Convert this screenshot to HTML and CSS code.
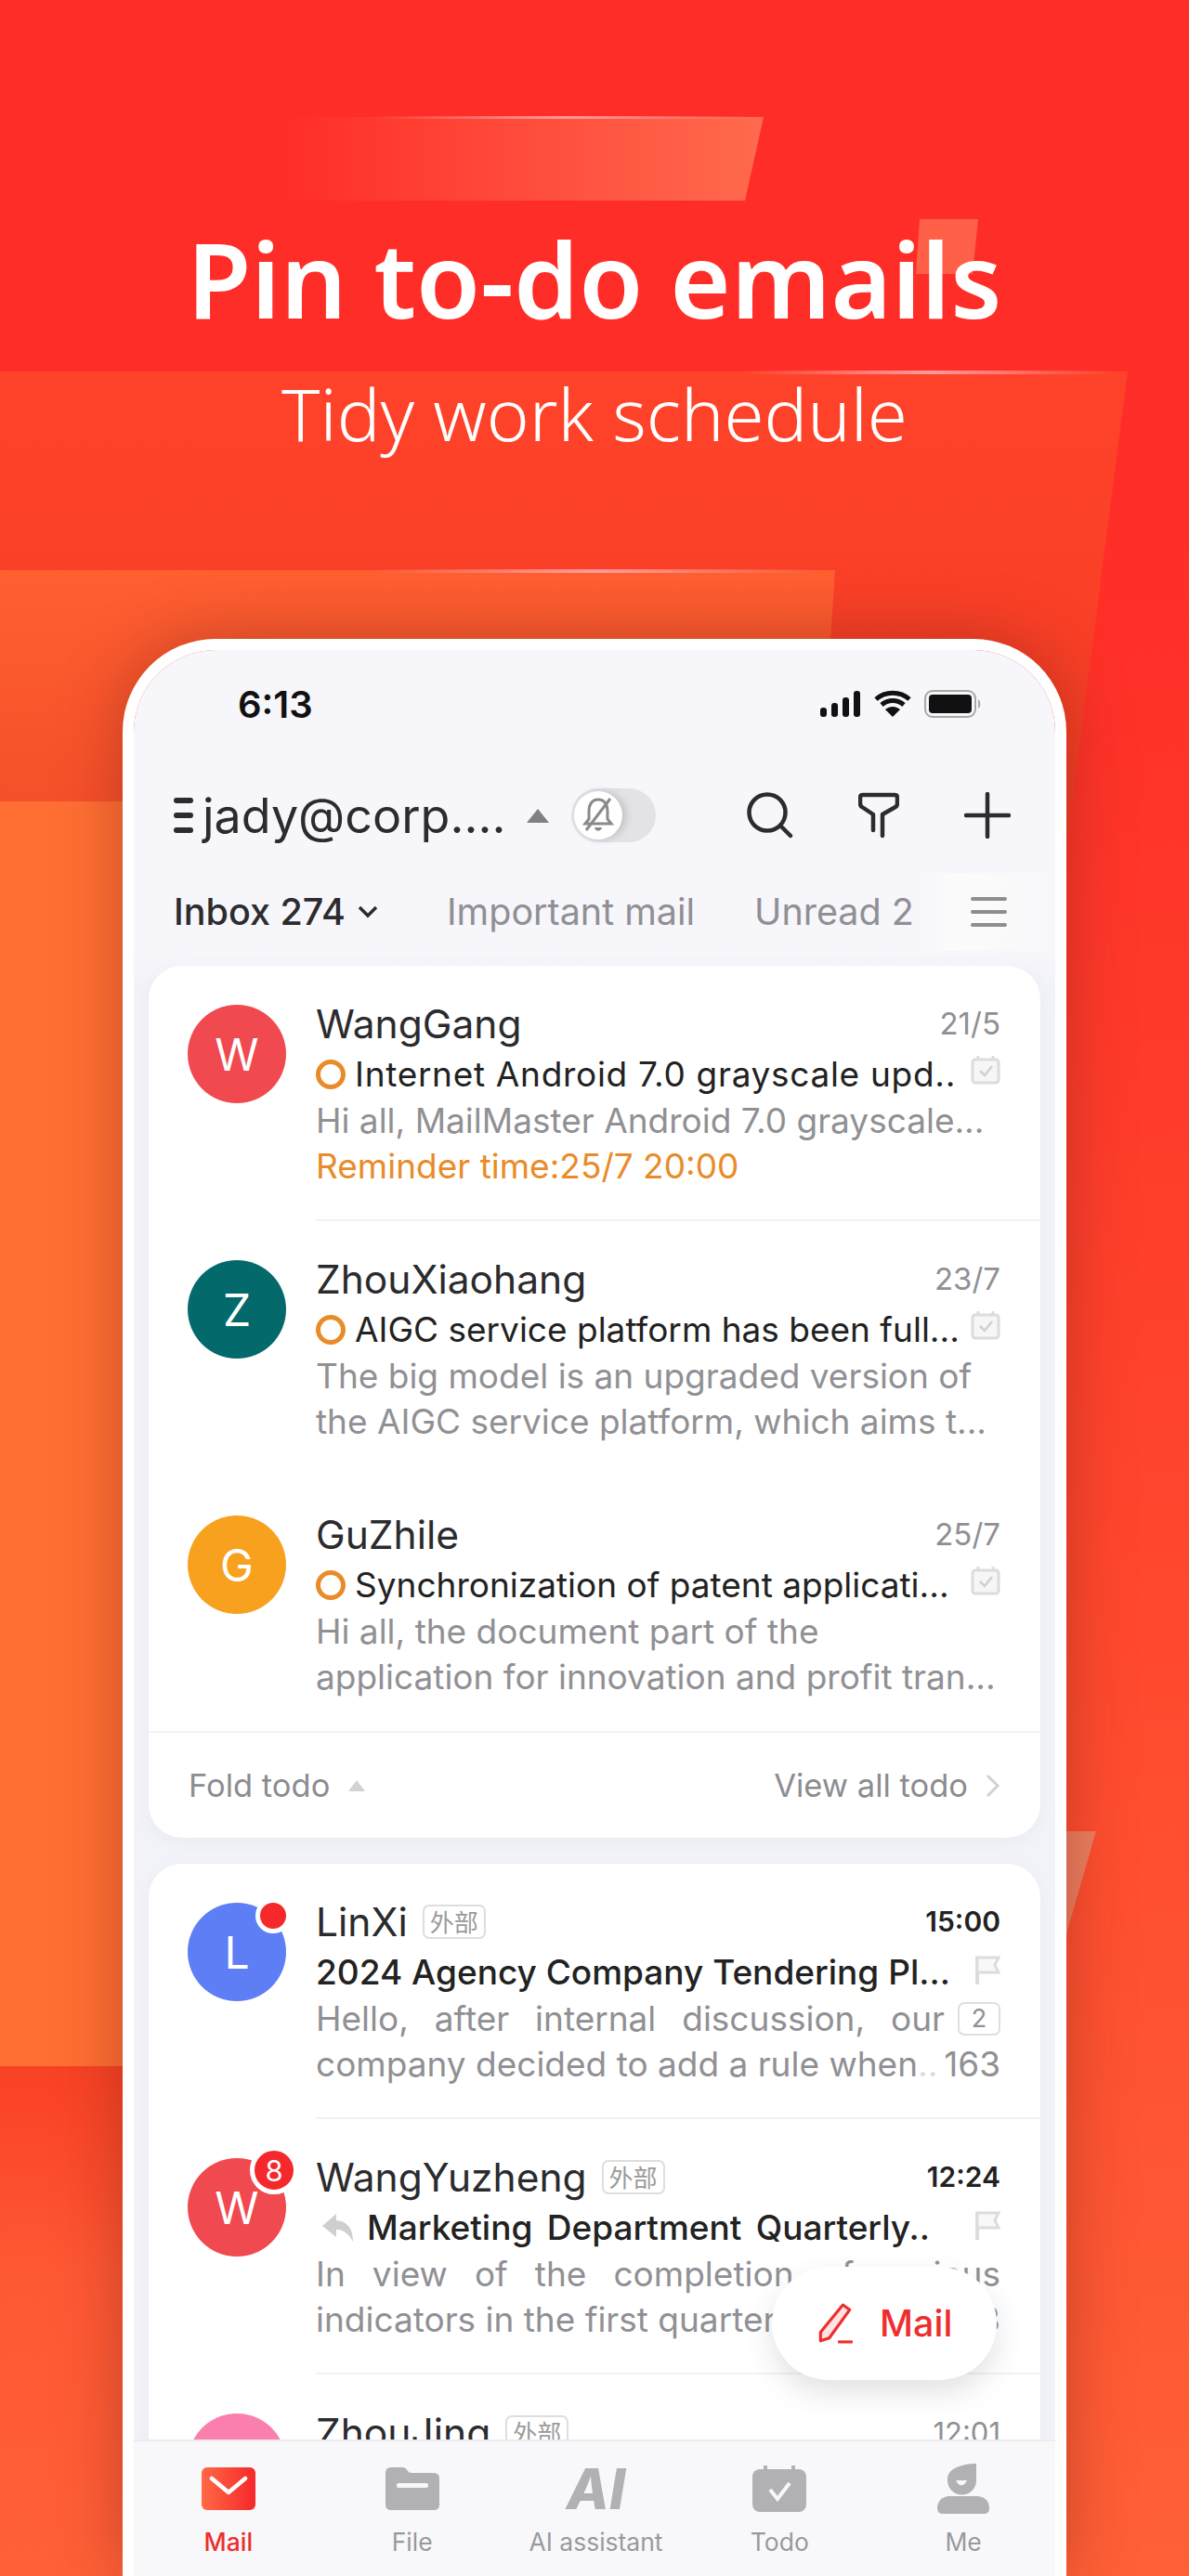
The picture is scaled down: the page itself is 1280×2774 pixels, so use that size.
FILE: index.html
```html
<!DOCTYPE html>
<html lang="en">
<head>
    <meta charset="UTF-8">
    <title>Pin to-do emails</title>
    <link rel="stylesheet" href="styles.css">
</head>
<body>
<div class="page">
    <!-- background shapes -->
    <svg class="bg-shapes" width="1280" height="2774" viewBox="0 0 1280 2774">
        <defs>
            <linearGradient id="bgBase" x1="0" y1="0" x2="0" y2="1">
                <stop offset="0" stop-color="#ff2d27"/>
                <stop offset="0.2" stop-color="#ff2d27"/>
                <stop offset="0.7" stop-color="#ff4d2f"/>
                <stop offset="1" stop-color="#ff6037"/>
            </linearGradient>
            <linearGradient id="barFade" x1="0" y1="0" x2="1" y2="0">
                <stop offset="0" stop-color="#ff6a4d" stop-opacity="0"/>
                <stop offset="1" stop-color="#ff6a4d"/>
            </linearGradient>
            <linearGradient id="midShape" x1="0" y1="0" x2="0" y2="1">
                <stop offset="0" stop-color="#ff432a"/>
                <stop offset="1" stop-color="#f43d24"/>
            </linearGradient>
            <linearGradient id="lowShape" x1="0" y1="0" x2="0" y2="1">
                <stop offset="0" stop-color="#ff5f31"/>
                <stop offset="1" stop-color="#f44e28"/>
            </linearGradient>
            <linearGradient id="footShape" x1="0" y1="0" x2="0" y2="1">
                <stop offset="0" stop-color="#f94224"/>
                <stop offset="1" stop-color="#f94224" stop-opacity="0"/>
            </linearGradient>
            <linearGradient id="glow" x1="0" y1="0" x2="1" y2="0">
                <stop offset="0" stop-color="#ff9a9a" stop-opacity="0"/>
                <stop offset="0.5" stop-color="#ff9a9a"/>
                <stop offset="1" stop-color="#ff9a9a" stop-opacity="0"/>
            </linearGradient>
        </defs>
        <rect width="1280" height="2774" fill="url(#bgBase)"/>
        <polygon points="300,126 822,126 802,216 300,216" fill="url(#barFade)"/>
        <polygon points="990,236 1053,236 1047,295 986,295" fill="#ff6048"/>
        <polygon points="0,400 1214,400 1148,912 0,912" fill="url(#midShape)"/>
        <polygon points="0,614 899,614 880,900 0,900" fill="url(#lowShape)"/>
        <rect x="0" y="863" width="140" height="1362" fill="#ff6f33"/>
        <rect x="0" y="2225" width="140" height="220" fill="url(#footShape)"/>
        <polygon points="1180,1972 1140,1972 1140,2110" fill="#ee8060"/>
        <rect x="400" y="125" width="420" height="3" fill="url(#glow)"/>
        <rect x="800" y="399" width="400" height="4" fill="url(#glow)"/>
        <rect x="400" y="613" width="480" height="4" fill="url(#glow)"/>
    </svg>

    <header class="hero">
        <h1>Pin to-do emails</h1>
        <p>Tidy work schedule</p>
    </header>

    <!-- icons used more than once -->
    <svg class="icon-defs" width="0" height="0">
        <symbol id="icCal" viewBox="0 0 32 32">
            <path d="M8 1v5M24 1v5" fill="none" stroke="#dcdcdc" stroke-width="3"/>
            <rect x="2" y="5" width="28" height="25" rx="3" fill="#f6f6f6" stroke="#dcdcdc" stroke-width="3"/>
            <path d="M10 17l5 5 8-10" fill="none" stroke="#d0d0d0" stroke-width="2.5"/>
        </symbol>
        <symbol id="icFlag" viewBox="0 0 28 32">
            <path d="M3 2v30" stroke="#dcdcdc" stroke-width="4" fill="none"/>
            <path d="M3 3h23l-4 8 4 8H3z" fill="#f8f8f8" stroke="#dcdcdc" stroke-width="3"/>
        </symbol>
    </svg>

    <div class="phone">
        <div class="screen">
            <div class="status-bar">
                <span class="clock">6:13</span>
                <div class="status-icons">
                    <svg width="44" height="28" viewBox="0 0 44 28">
                        <rect x="0" y="18" width="7" height="10" rx="3" fill="#111"/>
                        <rect x="12" y="13" width="7" height="15" rx="3" fill="#111"/>
                        <rect x="24" y="7" width="7" height="21" rx="3" fill="#111"/>
                        <rect x="36" y="0" width="7" height="28" rx="3" fill="#111"/>
                    </svg>
                    <svg width="40" height="30" viewBox="0 0 40 30">
                        <path d="M2 10C12 1 28 1 38 10M8 16C15 10 25 10 32 16" fill="none" stroke="#111" stroke-width="5"/>
                        <path d="M20 29l-8-8c5-4 11-4 16 0z" fill="#111"/>
                    </svg>
                    <svg width="62" height="30" viewBox="0 0 62 30">
                        <rect x="1" y="1" width="54" height="28" rx="8" fill="none" stroke="#a8a8a8" stroke-width="2"/>
                        <rect x="5" y="5" width="46" height="20" rx="4" fill="#111"/>
                        <path d="M58 10c3 1 3 9 0 10z" fill="#a8a8a8"/>
                    </svg>
                </div>
            </div>

            <div class="account-bar">
                <div class="acc-menu"><i></i><i></i><i></i></div>
                <span class="acc-name">jady@corp....</span>
                <span class="acc-caret"></span>
                <div class="bell-toggle">
                    <span class="bell-knob">
                        <svg width="34" height="40" viewBox="0 0 34 40">
                            <path d="M17 3c-7 0-10 6-10 12v9l-4 5h28l-4-5v-9c0-6-3-12-10-12z" fill="none" stroke="#8a8a8a" stroke-width="3"/>
                            <path d="M13 33c1 5 7 5 8 0z" fill="#8a8a8a"/>
                            <path d="M30 2L4 36" stroke="#8a8a8a" stroke-width="3"/>
                        </svg>
                    </span>
                </div>
                <div class="acc-actions">
                    <svg width="50" height="50" viewBox="0 0 50 50">
                        <circle cx="22" cy="22" r="19.5" fill="none" stroke="#2c2c30" stroke-width="4.5"/>
                        <path d="M36 36l11 11" stroke="#2c2c30" stroke-width="4.5" stroke-linecap="round"/>
                    </svg>
                    <svg width="44" height="50" viewBox="0 0 44 50">
                        <path d="M16 41V24L4 16Q2 15 2 12V6Q2 3 5 3H39Q42 3 42 6V12Q42 15 40 16L26 24V47" fill="none" stroke="#2c2c30" stroke-width="4.5" stroke-linecap="round" stroke-linejoin="round"/>
                    </svg>
                    <svg width="50" height="50" viewBox="0 0 50 50">
                        <path d="M25 2v46M2 25h46" stroke="#2c2c30" stroke-width="4.5" stroke-linecap="round"/>
                    </svg>
                </div>
            </div>

            <div class="folder-tabs">
                <span class="tab-current">Inbox 274</span>
                <svg class="tab-chev" width="22" height="14" viewBox="0 0 22 14">
                    <path d="M2 2l9 9 9-9" fill="none" stroke="#2c2c30" stroke-width="3.5"/>
                </svg>
                <span class="tab-other tab-important">Important mail</span>
                <span class="tab-other tab-unread">Unread 2</span>
                <div class="tab-menu"><i></i><i></i><i></i></div>
            </div>

            <div class="mail-list">
                <section class="card">
                    <article class="mail">
                        <div class="avatar av-red">W</div>
                        <div class="mail-body">
                            <div class="line-name"><span class="name">WangGang</span><span class="date">21/5</span></div>
                            <div class="line-subject"><span class="ring"></span><span class="subject subject-wide">Internet Android 7.0 grayscale upd..</span><svg class="side-icon" width="32" height="32"><use href="#icCal"/></svg></div>
                            <div class="line-preview">Hi all, MailMaster Android 7.0 grayscale...</div>
                            <div class="line-preview reminder">Reminder time:25/7 20:00</div>
                        </div>
                    </article>
                    <div class="sep"></div>
                    <article class="mail">
                        <div class="avatar av-teal">Z</div>
                        <div class="mail-body">
                            <div class="line-name"><span class="name">ZhouXiaohang</span><span class="date">23/7</span></div>
                            <div class="line-subject"><span class="ring"></span><span class="subject">AIGC service platform has been full...</span><svg class="side-icon" width="32" height="32"><use href="#icCal"/></svg></div>
                            <div class="line-preview">The big model is an upgraded version of</div>
                            <div class="line-preview">the AIGC service platform, which aims t...</div>
                        </div>
                    </article>
                    <div class="sep sep-none"></div>
                    <article class="mail mail-last">
                        <div class="avatar av-amber">G</div>
                        <div class="mail-body">
                            <div class="line-name"><span class="name">GuZhile</span><span class="date">25/7</span></div>
                            <div class="line-subject"><span class="ring"></span><span class="subject">Synchronization of patent applicati...</span><svg class="side-icon" width="32" height="32"><use href="#icCal"/></svg></div>
                            <div class="line-preview">Hi all, the document part of the</div>
                            <div class="line-preview">application for innovation and profit tran...</div>
                        </div>
                    </article>
                    <div class="todo-foot">
                        <span class="fold">Fold todo<i class="fold-caret"></i></span>
                        <span class="view-all">View all todo
                            <svg width="16" height="26" viewBox="0 0 16 26"><path d="M2 2l11 11L2 24" fill="none" stroke="#d2d2d2" stroke-width="3"/></svg>
                        </span>
                    </div>
                </section>

                <section class="card">
                    <article class="mail">
                        <div class="avatar av-blue">L<span class="dot"></span></div>
                        <div class="mail-body">
                            <div class="line-name"><span class="name">LinXi</span><span class="tag">外部</span><span class="date date-unread">15:00</span></div>
                            <div class="line-subject"><span class="subject subject-unread">2024 Agency Company Tendering Pl...</span><svg class="side-icon flag" width="28" height="32"><use href="#icFlag"/></svg></div>
                            <div class="line-preview line-count"><span class="just">Hello, after internal discussion, our</span><span class="count">2</span></div>
                            <div class="line-preview line-count"><span class="fade-text">company decided to add a rule when<b>..</b></span><span class="num">163</span></div>
                        </div>
                    </article>
                    <div class="sep"></div>
                    <article class="mail">
                        <div class="avatar av-red">W<span class="dot dot-num">8</span></div>
                        <div class="mail-body">
                            <div class="line-name"><span class="name">WangYuzheng</span><span class="tag">外部</span><span class="date date-unread">12:24</span></div>
                            <div class="line-subject">
                                <svg class="reply" width="34" height="30" viewBox="0 0 34 30"><path d="M15 0L0 13l15 12v-8c8 0 13 4 18 13 0-14-6-22-18-23z" fill="#cfcfcf"/></svg>
                                <span class="subject subject-unread just just-subject">Marketing Department Quarterly..</span><svg class="side-icon flag" width="28" height="32"><use href="#icFlag"/></svg>
                            </div>
                            <div class="line-preview just">In view of the completion of various</div>
                            <div class="line-preview line-count"><span>indicators in the first quarter</span><span class="num">8</span></div>
                        </div>
                    </article>
                    <div class="sep"></div>
                    <article class="mail">
                        <div class="avatar av-pink">Z</div>
                        <div class="mail-body">
                            <div class="line-name"><span class="name">ZhouJing</span><span class="tag">外部</span><span class="date date-clock">12:01</span></div>
                        </div>
                    </article>
                </section>
            </div>

            <nav class="tabbar">
                <div class="tab-item active">
                    <svg width="58" height="46" viewBox="0 0 58 46">
                        <defs><linearGradient id="mailRed" x1="0" y1="0" x2="1" y2="0"><stop offset="0" stop-color="#ff6a45"/><stop offset="1" stop-color="#f7272b"/></linearGradient></defs>
                        <rect width="58" height="46" rx="6" fill="url(#mailRed)"/>
                        <path d="M11 12l18 15 18-15" fill="none" stroke="#fff" stroke-width="4.5" stroke-linecap="round" stroke-linejoin="round"/>
                    </svg>
                    <span>Mail</span>
                </div>
                <div class="tab-item">
                    <svg width="58" height="46" viewBox="0 0 58 46">
                        <path d="M0 6Q0 0 6 0H18Q22 0 24 4Q25 6 28 6H52Q58 6 58 12V40Q58 46 52 46H6Q0 46 0 40z" fill="#b1b1b3"/>
                        <rect x="12" y="17" width="34" height="5" rx="2" fill="#f8f8fa"/>
                    </svg>
                    <span>File</span>
                </div>
                <div class="tab-item">
                    <span class="ai-mark">AI</span>
                    <span>AI assistant</span>
                </div>
                <div class="tab-item">
                    <svg width="58" height="50" viewBox="0 0 58 50">
                        <path d="M14 0v8M44 0v8" stroke="#b1b1b3" stroke-width="4"/>
                        <rect y="4" width="58" height="46" rx="8" fill="#b1b1b3"/>
                        <path d="M19 26l8 10 13-17" fill="none" stroke="#f8f8fa" stroke-width="4"/>
                    </svg>
                    <span>Todo</span>
                </div>
                <div class="tab-item">
                    <svg width="56" height="54" viewBox="0 0 56 54">
                        <path d="M42 0V18a15.500 15.500 0 0 1-31 0V16C11 6 26 0 42 0z" fill="#b1b1b3"/>
                        <path d="M20 18c3 7 9 7 12 0z" fill="#f8f8fa"/>
                        <path d="M12 35H44Q56 37 56 48Q56 54 50 54H6Q0 54 0 48Q0 37 12 35z" fill="#b1b1b3"/>
                    </svg>
                    <span>Me</span>
                </div>
            </nav>

            <div class="fab">
                <svg width="40" height="44" viewBox="0 0 38 42">
                    <path d="M27 2l7 5L13 36l-9 3 0-9z" fill="#fde3e1" stroke="#ee2e2e" stroke-width="3" stroke-linejoin="round"/>
                    <path d="M22 40h15" stroke="#ee2e2e" stroke-width="3"/>
                </svg>
                <span>Mail</span>
            </div>
        </div>
    </div>
</div>
</body>
</html>
```
FILE: styles.css
```css
* {
    box-sizing: border-box;
}
body {
    margin: 0;
    font-family: Inter, "Liberation Sans", sans-serif;
}
.page {
    position: relative;
    width: 1280px;
    height: 2774px;
    overflow: hidden;
    background: #ff2d27;
}
.bg-shapes {
    position: absolute;
    top: 0;
    left: 0;
}
.icon-defs {
    position: absolute;
}

/* Hero */
.hero {
    position: relative;
    height: 688px;
    padding-top: 226px;
    text-align: center;
    color: #fff;
    font-family: "Noto Sans", sans-serif;
}
.hero h1 {
    margin: 0;
    font-size: 112px;
    line-height: 148px;
    font-weight: 600;
}
.hero p {
    margin: 23px 0 0;
    font-size: 78px;
    line-height: 96px;
    font-weight: 300;
}

/* Phone */
.phone {
    position: relative;
    width: 1016px;
    height: 2086px;
    margin: 0 auto;
    border: 12px solid #fff;
    border-bottom: none;
    border-radius: 100px 100px 0 0;
    box-shadow: 0 0 70px rgba(110, 30, 20, 0.4);
}
.screen {
    position: relative;
    display: flex;
    flex-direction: column;
    height: 100%;
    overflow: hidden;
    background: #f6f6fb;
    border-radius: 88px 88px 0 0;
}

/* Status bar */
.status-bar {
    flex: none;
    display: flex;
    align-items: center;
    justify-content: space-between;
    height: 116px;
    padding: 0 79px 0 112px;
}
.clock {
    font-size: 40px;
    font-weight: 600;
    color: #111;
}
.status-icons {
    display: flex;
    align-items: center;
    gap: 14px;
}

/* Account row */
.account-bar {
    flex: none;
    display: flex;
    align-items: center;
    height: 124px;
    padding-left: 43px;
}
.acc-menu {
    display: flex;
    flex-direction: column;
    gap: 10px;
    margin-right: 10px;
}
.acc-menu i {
    display: block;
    width: 21px;
    height: 6px;
    border-radius: 3px;
    background: #2c2c30;
}
.acc-name {
    width: 349px;
    font-size: 52px;
    color: #2c2c30;
    white-space: nowrap;
}
.acc-caret {
    width: 0;
    height: 0;
    border-left: 12px solid transparent;
    border-right: 12px solid transparent;
    border-bottom: 15px solid #808084;
}
.bell-toggle {
    width: 91px;
    height: 58px;
    margin-left: 24px;
    padding: 3px;
    border-radius: 29px;
    background: #e3e3e5;
}
.bell-knob {
    display: flex;
    align-items: center;
    justify-content: center;
    width: 52px;
    height: 52px;
    border-radius: 50%;
    background: #fff;
    box-shadow: 4px 0 8px rgba(0, 0, 0, 0.15);
}
.acc-actions {
    display: flex;
    align-items: center;
    gap: 70px;
    margin-left: 98px;
}

/* Folder tabs */
.folder-tabs {
    flex: none;
    position: relative;
    display: flex;
    align-items: center;
    height: 84px;
    padding-left: 43px;
    font-size: 39.5px;
    white-space: nowrap;
}
.tab-current {
    width: 198px;
    font-weight: 500;
    color: #2c2c30;
}
.tab-chev {
    margin-right: 74px;
}
.tab-other {
    color: #8f8f94;
}
.tab-important {
    width: 331px;
}
.tab-menu {
    position: absolute;
    top: 0;
    right: 0;
    display: flex;
    flex-direction: column;
    justify-content: center;
    gap: 10px;
    width: 150px;
    height: 84px;
    padding: 0 52px 0 59px;
    background: linear-gradient(90deg, rgba(251, 251, 251, 0), #fbfbfb 25%, #f9f9fb 90%, rgba(251, 251, 251, 0));
}
.tab-menu i {
    display: block;
    height: 4px;
    border-radius: 2px;
    background: #8e8e8e;
}

/* Mail list */
.mail-list {
    flex: 1;
    min-height: 0;
    overflow: hidden;
    padding: 16px 16px 0;
    background: linear-gradient(#f6f6fb, #f2f3f8 40px);
}
.card {
    margin-bottom: 28px;
    border-radius: 36px;
    background: #fff;
    box-shadow: 0 4px 16px rgba(120, 120, 160, 0.06);
}
.mail {
    display: flex;
    gap: 32px;
    height: 273px;
    padding: 42px 43px 0 42px;
}
.mail-last {
    height: 274px;
}
.avatar {
    position: relative;
    flex: none;
    display: flex;
    align-items: center;
    justify-content: center;
    width: 106px;
    height: 106px;
    border-radius: 50%;
    font-size: 48px;
    color: #fff;
}
.av-red { background: #f0494f; }
.av-teal { background: #04696b; }
.av-amber { background: #f7a11f; }
.av-blue { background: #5e7ef5; }
.av-pink { background: #fb7fae; }
.dot {
    position: absolute;
    top: -5px;
    right: -5px;
    width: 38px;
    height: 38px;
    border: 5px solid #fff;
    border-radius: 50%;
    background: #f5282c;
}
.dot-num {
    top: -13px;
    right: -13px;
    display: flex;
    align-items: center;
    justify-content: center;
    width: 52px;
    height: 52px;
    font-size: 31px;
}
.mail-body {
    flex: 1;
    min-width: 0;
    margin-top: -5px;
}
.line-name {
    display: flex;
    align-items: center;
    height: 50px;
    margin-bottom: 4px;
}
.name {
    font-size: 42.500px;
    color: #2b2b2e;
}
.date {
    margin-left: auto;
    font-size: 33px;
    color: #8f8f94;
}
.date-unread {
    font-size: 30px;
    font-weight: 600;
    color: #222;
}
.date-clock {
    font-size: 31px;
}
.tag {
    margin-left: 16px;
    padding: 0 6px;
    height: 37px;
    border: 2px solid #dedede;
    border-radius: 7px;
    font-family: "Noto Sans CJK SC", sans-serif;
    font-size: 26px;
    line-height: 32px;
    color: #9a9a9a;
}
.line-subject {
    display: flex;
    align-items: center;
    height: 51px;
}
.ring {
    flex: none;
    width: 32px;
    height: 32px;
    margin-right: 10px;
    border: 5px solid #e98b28;
    border-radius: 50%;
}
.subject {
    font-size: 37px;
    color: #222;
    white-space: nowrap;
}
.subject-wide {
    letter-spacing: 0.7px;
}
.subject-unread {
    font-weight: 500;
}
.side-icon {
    margin-left: auto;
    flex: none;
    margin-top: -10px;
}
.flag {
    margin-top: -6px;
}
.reply {
    flex: none;
    margin: 0 14px 0 7px;
}
.line-preview {
    height: 49px;
    font-size: 37px;
    line-height: 49px;
    color: #909094;
    white-space: nowrap;
}
.reminder {
    color: #e98b28;
}
.line-count {
    display: flex;
    align-items: center;
    justify-content: space-between;
}
.just {
    display: block;
    text-align: justify;
    text-align-last: justify;
    white-space: normal;
}
.line-count .just {
    width: 677px;
}
.just-subject {
    width: 606px;
    white-space: nowrap;
}
.count {
    width: 46px;
    height: 36px;
    border: 2px solid #dedede;
    border-radius: 7px;
    font-size: 27px;
    line-height: 32px;
    text-align: center;
}
.fade-text b {
    font-weight: 400;
    color: #dcdcdc;
}
.sep {
    height: 2px;
    margin-left: 180px;
    background: #f2f2f4;
}
.sep-none {
    background: transparent;
}
.todo-foot {
    display: flex;
    align-items: center;
    justify-content: space-between;
    height: 115px;
    padding: 0 43px;
    border-top: 2px solid #f2f2f4;
    font-size: 34.500px;
    color: #8c8c91;
}
.fold {
    display: flex;
    align-items: center;
}
.fold-caret {
    width: 0;
    height: 0;
    margin-left: 20px;
    border-left: 9px solid transparent;
    border-right: 9px solid transparent;
    border-bottom: 12px solid #d2d2d2;
}
.view-all {
    display: flex;
    align-items: center;
    gap: 19px;
}

/* Bottom tabs */
.tabbar {
    flex: none;
    display: grid;
    grid-template-columns: repeat(5, 1fr);
    height: 147px;
    padding: 24px 0 0 3px;
    border-top: 2px solid #ececf0;
    background: #f8f8fa;
}
.tab-item {
    display: flex;
    flex-direction: column;
    align-items: center;
    height: 100px;
    font-size: 26.500px;
    color: #99999c;
}
.tab-item svg, .ai-mark {
    height: 54px;
    flex: none;
}
.tab-item span:last-child {
    margin-top: 14px;
}
.tab-item.active {
    color: #ec2f2f;
    font-weight: 500;
}
.ai-mark {
    font-size: 60px;
    font-weight: 800;
    font-style: italic;
    line-height: 54px;
    color: #b1b1b3;
}

/* Floating compose button */
.fab {
    position: absolute;
    top: 1741px;
    left: 687px;
    display: flex;
    align-items: center;
    gap: 28px;
    width: 242px;
    height: 122px;
    padding-left: 48px;
    border-radius: 61px;
    background: #fff;
    box-shadow: 0 14px 30px rgba(80, 80, 100, 0.16);
    font-size: 39.500px;
    font-weight: 500;
    color: #ee2e2e;
}
```
